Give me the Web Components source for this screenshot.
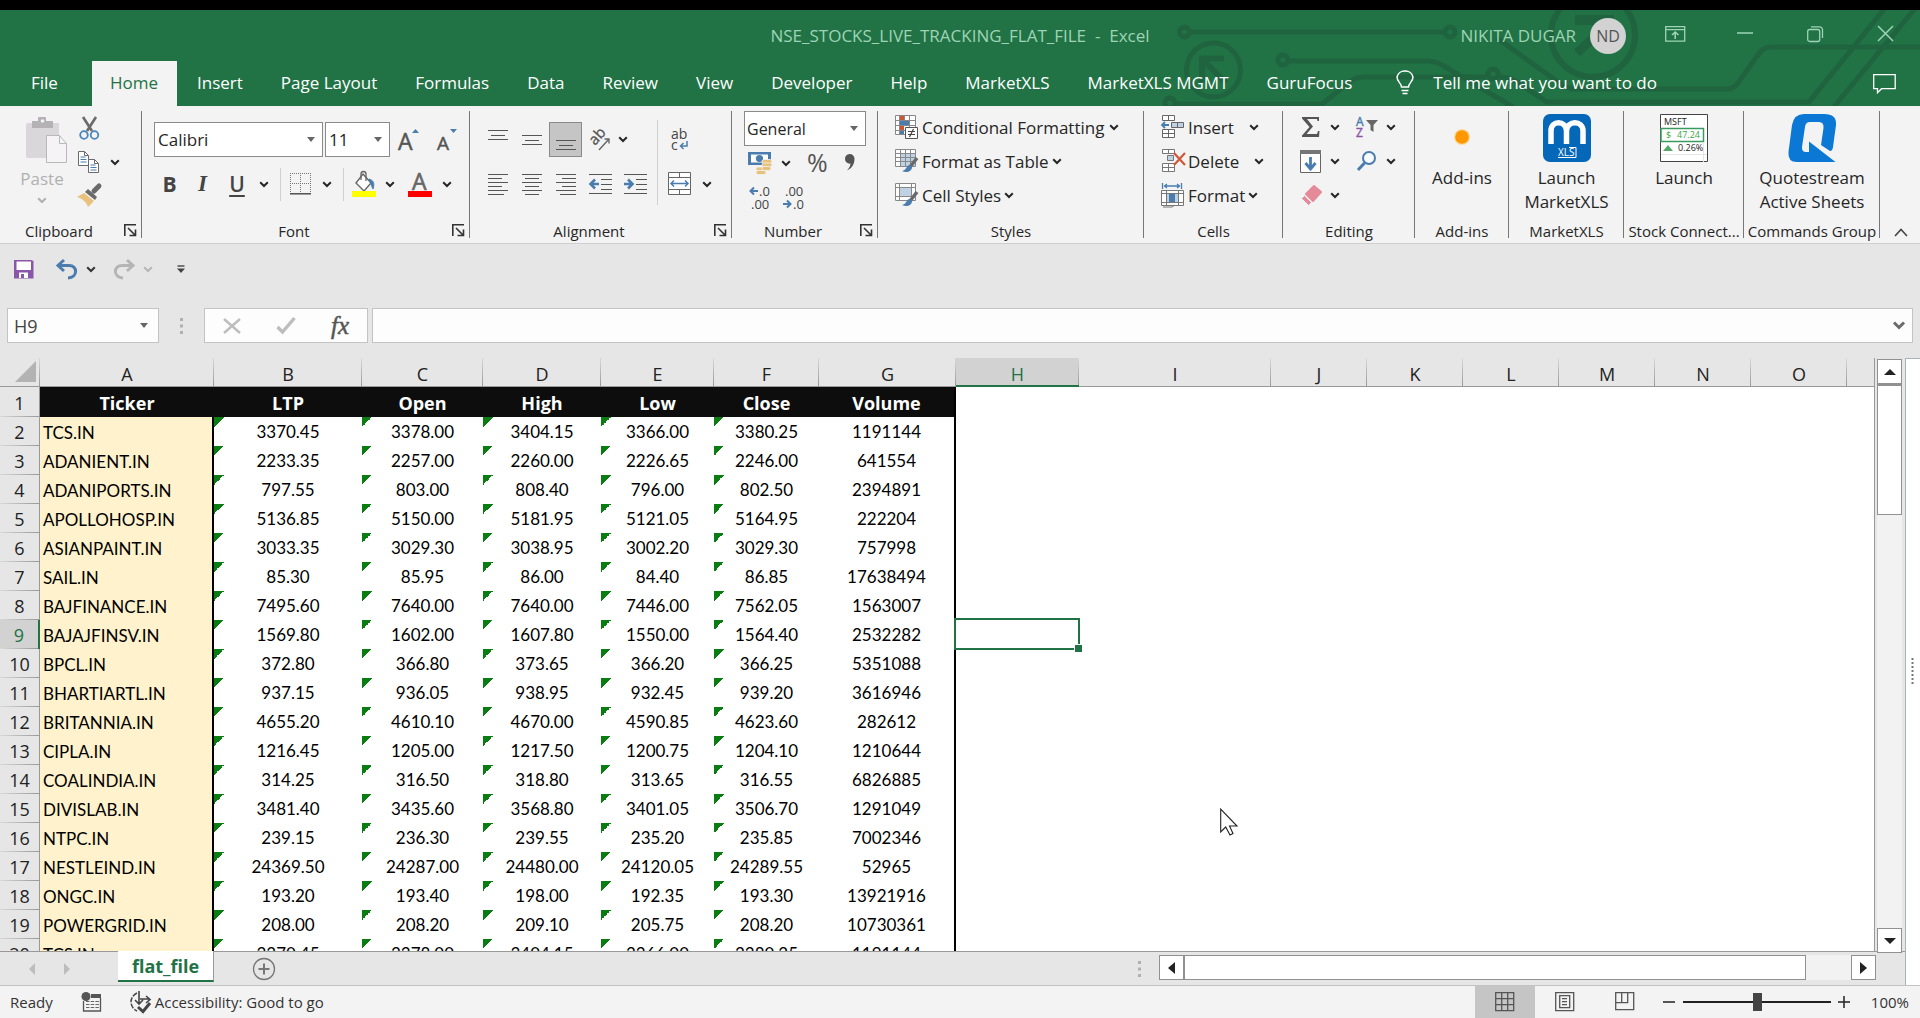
<!DOCTYPE html>
<html lang="en">
<head>
<meta charset="utf-8">
<title>NSE_STOCKS_LIVE_TRACKING_FLAT_FILE - Excel</title>
<style>
html,body{margin:0;height:100%}
body{font-family:"Open Sans","Noto Sans",sans-serif;font-size:17px;color:#262626;background:#e6e6e6;overflow:hidden}
</style>
</head>
<body>
<excel-window></excel-window>
<script>
const lines=(rows)=>rows.map(r=>`<path d="M${r[0]} ${r[2]}.5H${r[1]}" stroke="#555"/>`).join('');
const sheetBrush='<path d="M22 9l-7 9" stroke="#6a6a6a" stroke-width="3.5"/><path d="M15 16c-4 0-3 5-8 6 4 2 10 1 10-4z" fill="#4a7dae"/>';
const ICONS={
 chev:[10,7,'<path d="M1.2 1.2L5 5l3.800-3.800" fill="none" stroke="currentColor" stroke-width="2"/>'],
 caret:[8,5,'<path d="M0 0h8L4 5z" fill="#666"/>'],
 launch:[13,13,'<path d="M.8 12V.8H12M4 4l7 7M11.500 5.500v6h-6" fill="none" stroke="#333" stroke-width="1.600"/>'],
 paste:[42,46,'<path d="M2 6h31v12H22v23H2a2 2 0 0 1-2-2V8a2 2 0 0 1 2-2z" fill="#d9d7da"/><path d="M6 4h6V1a1 1 0 0 1 1-1h6a1 1 0 0 1 1 1v3h7v7H6z" fill="#b4b2b5"/><circle cx="16.500" cy="4" r="1.800" fill="#f3f3f3"/><path d="M20.500 18.500h13l7 8v19h-20z" fill="#f5f3f6" stroke="#b9b9b9"/><path d="M33.500 18.500v8h7" fill="none" stroke="#b9b9b9"/>'],
 cut:[21,23,'<path d="M4 0l9 14M17 0L8 14" stroke="#6a6a6a" stroke-width="2.600"/><g fill="none" stroke="#4a85bd" stroke-width="1.800"><circle cx="5" cy="18" r="3.800"/><circle cx="15.500" cy="18" r="3.800"/></g>'],
 copy:[22,23,'<g fill="#fff" stroke="#6a6a6a"><path d="M.5.5h6l4 4v10h-10z"/><path d="M10.500 8.500h6l4 4v9h-10z"/><path d="M6.500.5v4h4M16.500 8.500v4h4" fill="none"/></g><path d="M2.500 6h5M2.500 8.500h6M2.500 11h6M12.500 14h5M12.500 16.500h6M12.500 19h6" stroke="#4a7dae"/>'],
 brush:[24,22,'<path d="M17 6l5-5" stroke="#6a6a6a" stroke-width="5" stroke-linecap="round"/><path d="M11 4l9 8-2 3-10-8z" fill="#6a6a6a"/><path d="M7 8l10 8-6 6C9 16 4 13 0 12z" fill="#e8c17c"/>'],
 grow:[24,24,'<text x="1" y="22" font-size="23" fill="#555" stroke="#555" stroke-width=".5">A</text><path d="M15 5l3.500-4L22 5z" fill="#4a7dae"/>'],
 shrink:[24,24,'<text x="4" y="22" font-size="19" fill="#555" stroke="#555" stroke-width=".5">A</text><path d="M17 1h7l-3.500 4z" fill="#4a7dae"/>'],
 borders:[22,22,'<path d="M.5 0v21M0 .5h21M20.500 0v21M10.500 0v21M0 10.500h21" stroke="#777" stroke-dasharray="1 1"/><path d="M0 20.800h21" stroke="#444" stroke-width="1.400"/>'],
 fill:[24,26,'<path d="M11 3l8 9-7 8-8-8z" fill="#fff" stroke="#666" stroke-width="1.400"/><path d="M9 9V3a2.500 2.500 0 0 1 5 0v7" fill="none" stroke="#666" stroke-width="1.300"/><path d="M17 8c4 1 6 4 4 10-1-2-2-5-4-10z" fill="#4a7dae" stroke="#4a7dae"/><path d="M0 20h24v6H0z" fill="#ff0"/>'],
 fontcolor:[24,26,'<text x="4" y="19" font-size="23" fill="#666" stroke="#666" stroke-width=".6">A</text><path d="M0 20h24v6H0z" fill="#f00"/>'],
 top:[20,26,lines([[0,20,3],[3,17,8],[0,20,12]])],
 mid:[20,26,lines([[0,20,8],[3,17,13],[0,20,17]])],
 bot:[20,26,lines([[0,20,13],[3,17,18],[0,20,22]])],
 left:[20,22,lines([[0,20,1],[0,14,5],[0,20,9],[0,14,13],[0,20,17],[0,16,21]])],
 center:[20,22,lines([[0,20,1],[3,17,5],[0,20,9],[3,17,13],[0,20,17],[3,17,21]])],
 right:[20,22,lines([[0,20,1],[6,20,5],[0,20,9],[6,20,13],[0,20,17],[4,20,21]])],
 outdent:[24,22,lines([[0,23,1],[12,23,6],[12,23,11],[12,23,16],[0,23,20]])+'<path d="M10 11H2M6 6.500L1.500 11l4.500 4.500" stroke="#4a7dae" stroke-width="2.600" fill="none"/>'],
 indent:[24,22,lines([[0,23,1],[12,23,6],[12,23,11],[12,23,16],[0,23,20]])+'<path d="M0 11h8M4 6.500L8.500 11 4 15.500" stroke="#4a7dae" stroke-width="2.600" fill="none"/>'],
 orient:[22,22,'<text x="0" y="0" font-size="15" fill="#555" stroke="#555" stroke-width=".3" transform="translate(6 17) rotate(-48)">ab</text><path d="M10 21L20 10M15.500 10H20v4.500" fill="none" stroke="#666" stroke-width="1.400"/>'],
 wrap:[20,24,'<text x="1" y="11" font-size="14" fill="#444">ab</text><text x="1" y="22" font-size="14" fill="#444">c</text><path d="M17 13v5h-6M13.500 15l-3 3 3 3" fill="none" stroke="#4a7dae" stroke-width="1.500"/>'],
 merge:[24,24,'<path d="M.5.5h22v22H.5zM.5 5.500h22M.5 17.500h22M11.500.5v5M11.500 17.500v5" fill="#fff" stroke="#666"/><path d="M3 11.500h17M6 8.500l-3 3 3 3M17 8.500l3 3-3 3" fill="none" stroke="#4a7dae" stroke-width="1.500"/>'],
 money:[24,23,'<path d="M0 0h23v13H0z" fill="#4a7dae"/><path d="M3 2.500h17v8H3z" fill="#fff"/><circle cx="11.500" cy="6.500" r="3.600" fill="#4a7dae"/><g fill="#e8c17c" stroke="#f3f3f3" stroke-width=".8"><rect x="14" y="7.500" width="10" height="4" rx="2"/><rect x="14" y="11" width="10" height="4" rx="2"/><rect x="8" y="15" width="10" height="4" rx="2"/><rect x="8" y="18.500" width="10" height="4" rx="2"/><rect x="14" y="14.500" width="9" height="4" rx="2"/></g>'],
 pct:[22,24,'<text x="1" y="21" font-size="25" fill="#555">%</text>'],
 comma:[12,18,'<path d="M2 5a4.500 4.500 0 0 1 9.500-.5c0 6-2.500 9.500-7.500 12 2.500-3 3.500-5 3.500-7A4.500 4.500 0 0 1 2 5z" fill="#555"/>'],
 incdec:[24,25,'<path d="M9 6H2M5 2.500L1.500 6 5 9.500" stroke="#4a7dae" stroke-width="2" fill="none"/><text x="10" y="11" font-size="13" fill="#444">.0</text><text x="2" y="24" font-size="13" fill="#444">.00</text>'],
 decdec:[24,25,'<text x="2" y="11" font-size="13" fill="#444">.00</text><path d="M0 19h7M4 15.500L7.500 19 4 22.500" stroke="#4a7dae" stroke-width="2" fill="none"/><text x="10" y="24" font-size="13" fill="#444">.0</text>'],
 cond:[24,24,'<path d="M.5.5h20v19H.5z" fill="#fff"/><path d="M5 1h4v5H5zM5 11h4v4H5z" fill="#cf5532"/><path d="M5 6h9v4H5zM5 16h4v3H5z" fill="#4a7dae"/><path d="M.5.5h20v19H.5zM.5 5.500h20M.5 10.500h20M.5 15.500h20M4.500.5v19M9.500.5v5M14.500.5v19" fill="none" stroke="#888"/><path d="M10.500 12.500h12v11h-12z" fill="#fff" stroke="#555"/><path d="M13 16.500h7M13 19.500h7M18.500 14l-4 8" stroke="#444" stroke-width="1.200"/>'],
 table:[24,24,'<path d="M.5.5h20v17H.5z" fill="#fff"/><path d="M5 5h15v12H5z" fill="#bfd2e4"/><path d="M.5.500h20v17H.5zM.5 4.500h20M.5 8.500h20M.5 12.500h20M5.500.5v17M10.500.5v17M15.500.5v17" fill="none" stroke="#888"/>'+sheetBrush],
 cellst:[24,24,'<path d="M.5.5h20v17H.5z" fill="#fff"/><path d="M5 5h11v9H5z" fill="#bfd2e4"/><path d="M.5.5h20v17H.5zM.5 4.500h20M.5 13.500h20M4.500.5v17M16.500.5v17" fill="none" stroke="#888"/>'+sheetBrush],
 insert:[24,24,'<g fill="#fff" stroke="#666"><path d="M1.500.5h12v5h-12zM7.500.5v5M1.500 14.500h12v8h-12zM7.500 14.500v8M1.500 18.500h12"/><path d="M10.500 7.500h12v5h-12zM16.500 7.500v5" fill="#bfd2e4"/></g><path d="M8 10H1M4 7L1 10l3 3" fill="none" stroke="#4a7dae" stroke-width="1.800"/>'],
 del:[24,24,'<g fill="#fff" stroke="#777"><path d="M1.500.5h12v4h-12zM7.500.5v4M1.500 14.500h12v8h-12zM7.500 14.500v8M1.500 18.500h12"/><path d="M6.500 6.500h6v5h-6z" fill="#bfd2e4"/></g><path d="M13 4l11 12M24 4L13 16" stroke="#d0583a" stroke-width="2.200"/>'],
 format:[24,25,'<path d="M1.500 0v6M20.500 0v6M3 3h16M6 1L3.500 3 6 5M16 1l2.500 2L16 5" fill="none" stroke="#4a7dae" stroke-width="1.300"/><path d="M.5 7.500h22v15H.5z" fill="#fff"/><path d="M6 10h11v10H6z" fill="#bfd2e4"/><path d="M8 11h6v8H8z" fill="#4a7dae"/><path d="M.5 7.500h22v15H.5zM.5 10.500h22M.5 19.500h22M5.500 7.500v15M17.500 7.500v15" fill="none" stroke="#777"/><path d="M2 24h9l3-2" fill="none" stroke="#777"/>'],
 sum:[18,20,'<path d="M0 0h17v4h-1.500l-.5-2H5l6 7.500L4.500 17H15l1-3h1.500L17 20H0v-1.500L7.500 10 0 1.500z" fill="#555"/>'],
 sort:[22,20,'<text x="0" y="9" font-size="12" fill="#4a7dae" stroke="#4a7dae" stroke-width=".4">A</text><text x="0" y="20" font-size="12" fill="#8a56a8" stroke="#8a56a8" stroke-width=".4">Z</text><path d="M10 3h12l-4.500 5v7l-3-2V8z" fill="#666"/>'],
 filldown:[22,23,'<path d="M.5.5h20v22H.5z" fill="#fff" stroke="#666"/><path d="M0 0h21v4H0z" fill="#777"/><path d="M10.500 7v11M5.500 13l5 6 5-6" fill="none" stroke="#4a7dae" stroke-width="2.800"/>'],
 find:[20,20,'<circle cx="12" cy="7" r="6" fill="#f7fbff" stroke="#4a7dae" stroke-width="2"/><path d="M7.500 12L1 19" stroke="#4a7dae" stroke-width="3"/>'],
 eraser:[21,21,'<path d="M13 1l7 6-8 9-7-7z" fill="#e58a99" stroke="#e58a99" stroke-linejoin="round" stroke-width="2"/><path d="M3.500 10.500l7 7-3 3-7-7z" fill="#e58a99" stroke="#f3f3f3"/>'],
 dot:[18,18,'<circle cx="9" cy="9" r="8" fill="#fcd9a0"/><circle cx="9" cy="9" r="6.800" fill="#ff9800"/>'],
 mxls:[48,48,'<rect width="48" height="48" rx="7" fill="#0467b8"/><path d="M8 30V17c0-11 15-11 15.500 0v13V17C24 6 40 6 40 17v13" fill="none" stroke="#fff" stroke-width="5.500"/><text x="15" y="42" font-size="10" fill="#fff">XLS</text><path d="M15 43.500h18v-10h-7" fill="none" stroke="#fff"/>'],
 stock:[48,48,'<path d="M.5.5h47v47H.5z" fill="#fff" stroke="#444"/><text x="4" y="11" font-size="9" fill="#222">MSFT</text><path d="M1 14.500h42.500v13H1z" fill="#fff" stroke="#3a9a60" stroke-width="1.500"/><text x="6" y="24" font-size="9" fill="#3aa845">$</text><text x="17" y="24" font-size="9" fill="#3aa845">47.24</text><path d="M3 37l5-6 5 6z" fill="#55a868"/><text x="18" y="37" font-size="9" fill="#222">0.26%</text><path d="M1 40.500h46M43.500 28v20" stroke="#e6e6e6"/>'],
 quote:[48,48,'<path d="M16 0H36Q49 0 48 11L45 33Q44.500 37 42 37L33 31 35.500 14Q36 8 31 8H22Q17.500 8 17 13L14 33Q13.500 38 18 38H21V27.500L47.500 48H9Q-.5 48 .5 38L4 11Q6 0 16 0z" fill="#0a78d4"/>'],
 up:[14,9,'<path d="M1 8l6-6.500L13 8" fill="none" stroke="#444" stroke-width="1.600"/>'],
 save:[20,20,'<path d="M0 1h17l2.500 1v17.500H0z" fill="#8a56a8"/><path d="M2.500 2.500H17V11H2.500z" fill="#fff"/><path d="M5 13.500h9v5.500H5z" fill="#fff"/><path d="M7 15h3v4H7z" fill="#8a56a8"/>'],
 undo:[22,21,'<path d="M2 6.500h11c9 0 9 12-1 12.500M8 1L2 6.500 8 12" fill="none" stroke="#4a7dae" stroke-width="3"/>'],
 redo:[22,21,'<path d="M20 6.500H9c-9 0-9 12 1 12.500M14 1l6 5.500-6 5.500" fill="none" stroke="#b5b5b5" stroke-width="3"/>'],
 custom:[8,8,'<path d="M.5 1h7" stroke="#444" stroke-width="1.400"/><path d="M0 3.500h8L4 8z" fill="#444"/>'],
 cross:[18,16,'<path d="M1 1l16 14M17 1L1 15" stroke="#bdbdbd" stroke-width="2.400"/>'],
 check:[20,17,'<path d="M1.500 10l5 5L18.500 1" fill="none" stroke="#bdbdbd" stroke-width="3.400"/>'],
 boldchev:[12,9,'<path d="M1 1.500L6 6.500l5-5" fill="none" stroke="#6a6a6a" stroke-width="3"/>'],
 dots3:[3,16,'<path d="M0 0h3v3H0zM0 6.500h3v3H0zM0 13h3v3H0z" fill="#b0b0b0"/>'],
 dots7:[4,28,'<path d="M1.500 0v28" stroke="#777" stroke-width="2" stroke-dasharray="2 2"/>'],
 tu:[12,6,'<path d="M0 6h12L6 0z" fill="#222"/>'], td:[12,6,'<path d="M0 0h12L6 6z" fill="#222"/>'],
 tl:[7,12,'<path d="M7 0v12L0 6z" fill="#222"/>'], tr:[7,12,'<path d="M0 0v12l7-6z" fill="#222"/>'],
 navl:[6,12,'<path d="M6 0v12L0 6z" fill="#bdbdbd"/>'], navr:[6,12,'<path d="M0 0v12l6-6z" fill="#bdbdbd"/>'],
 add:[24,24,'<circle cx="12" cy="12" r="10.500" fill="none" stroke="#777" stroke-width="1.300"/><path d="M12 6.500v11M6.500 12h11" stroke="#777" stroke-width="2"/>'],
 macro:[22,20,'<circle cx="5" cy="4.500" r="4.500" fill="#555"/><path d="M10 2h10v4H10z" fill="#555"/><path d="M2.500 9v10h17V6" fill="none" stroke="#555" stroke-width="1.300"/><path d="M5 9.500h13M5 12.500h13M5 15.500h13" stroke="#666" stroke-dasharray="3.500 1.200"/>'],
 access:[22,22,'<path d="M7 2C-1 6-1 16 7 20" fill="none" stroke="#444" stroke-width="1.500" stroke-dasharray="5 1.500"/><path d="M9 0v13M5 9l4 4 4-4M10 8h9M16 5l4 3.500-4 3.500" fill="none" stroke="#444" stroke-width="1.600"/><path d="M8 16l5 4.500L20 12" fill="none" stroke="#444" stroke-width="3"/>'],
 normal:[20,20,'<path d="M.7.700h18v18H.7zM.7 6.700h18M.7 12.700h18M6.700.7v18M12.700.7v18" fill="none" stroke="#555" stroke-width="1.300"/>'],
 layout:[20,20,'<path d="M.7.700h18v18H.7zM4.700 3.700h10v12h-10zM7 6.700h5M7 9.700h5M7 12.700h5" fill="none" stroke="#555" stroke-width="1.300"/>'],
 breaks:[20,20,'<path d="M.7.700h18v17H.7zM.7 10.700h12v-10M6.700.7v10" fill="none" stroke="#555" stroke-width="1.300"/>'],
 ribbonopt:[21,16,'<path d="M.7.700h19v14.500H.7zM.7 3.700h19" fill="none" stroke="#9ed3b4" stroke-width="1.300"/><path d="M10.200 13V6.500M7 9l3.200-3L13.500 9" fill="none" stroke="#9ed3b4" stroke-width="1.600"/>'],
 min:[16,3,'<path d="M0 1h16" stroke="#9ed3b4" stroke-width="1.500"/>'],
 restore:[17,16,'<rect x=".7" y="3.500" width="12" height="12" rx="2" fill="none" stroke="#9ed3b4" stroke-width="1.300"/><path d="M4 .8h8.500a3 3 0 0 1 3 3V12" fill="none" stroke="#9ed3b4" stroke-width="1.300"/>'],
 close:[17,17,'<path d="M1 1l15 15M16 1L1 16" stroke="#9ed3b4" stroke-width="1.500"/>'],
 bulb:[18,25,'<path d="M5.500 17c0-4-4.500-5-4.500-10A7.800 7.800 0 0 1 9 1a7.800 7.800 0 0 1 8 6c0 5-4.500 6-4.500 10zM5.500 20.500h7M6.500 23.500h5" fill="none" stroke="#fff" stroke-width="1.500"/>'],
 comment:[23,20,'<path d="M.7.700h21.500v14H8.500l-4 4v-4H.7z" fill="none" stroke="#fff" stroke-width="1.300"/>'],
 pointer:[19,28,'<path d="M.7 1v23l5-5 4.300 8 3-1.500-3.500-7.500H17z" fill="#fff" stroke="#222" stroke-width="1.100"/>']
};
const icon=n=>`<x-icon name="${n}"></x-icon>`;
const btn=(n,l,c='')=>`<button class="${c}" aria-label="${l||n}">${icon(n)}</button>`;
const ch=(c='')=>btn('chev','More options','ch '+c);

const CSS=`*{box-sizing:border-box}
button{font:inherit;color:inherit;background:none;border:0;padding:0;margin:0;display:flex;align-items:center;justify-content:center;white-space:nowrap}
`;
function define(tag,css,html){
  customElements.define(tag,class extends HTMLElement{
    constructor(){super();this.attachShadow({mode:'open'});}
    connectedCallback(){this.shadowRoot.innerHTML=`<style>${CSS}${css}</style>`+(typeof html==='function'?html(this):html);}
  });
}
define('x-icon',`:host{display:block;flex:none}svg{display:block;font-family:"Open Sans",sans-serif;overflow:visible}`,
 el=>{const [w,h,p]=ICONS[el.getAttribute('name')];return `<svg width="${w}" height="${h}" viewBox="0 0 ${w} ${h}" aria-hidden="true">${p}</svg>`});

define('title-bar',`
:host{display:grid;grid-template-columns:1fr auto 1fr;align-items:center;height:51px;color:#9ed3b4;position:relative}
.title{white-space:pre}
.r{display:flex;justify-content:flex-end;align-items:center}
.av{width:36px;height:36px;border-radius:50%;background:#d2d2d2;color:#555;margin:0 14px;display:grid;place-items:center;font-size:16px}
.r button{width:70px;height:46px;padding-bottom:4px}`,
`<i></i><div class="title">NSE_STOCKS_LIVE_TRACKING_FLAT_FILE  -  Excel</div>
<div class="r"><span>NIKITA DUGAR</span><div class="av">ND</div>${btn('ribbonopt')}${btn('min')}${btn('restore')}${btn('close')}</div>`);

define('ribbon-tabs',`
:host{display:flex;height:45px;color:#fff;position:relative;align-items:stretch}
nav{display:flex;gap:3px}
nav a{color:inherit;text-decoration:none;padding:0 18px 2px 17px;display:flex;align-items:center;white-space:nowrap}
nav a:first-child{padding:0 31px 2px}
nav a.on{background:#f3f3f3;color:#217346;padding:0 19px 2px 18px}
nav{margin-right:26px}
.tell{gap:19px;padding-bottom:2px}
.cm{margin-left:auto;margin-right:24px}`,
`<nav>${['File','Home','Insert','Page Layout','Formulas','Data','Review','View','Developer','Help','MarketXLS','MarketXLS MGMT','GuruFocus'].map(t=>`<a href="#"${t==='Home'?' class="on"':''}>${t}</a>`).join('')}</nav>
<button class="tell">${icon('bulb')}<span>Tell me what you want to do</span></button>${btn('comment','Comments','cm')}`);

define('ribbon-group',`
:host{display:flex;flex-direction:column;height:137px;flex:none;position:relative;padding-bottom:6px;
 background:linear-gradient(#777,#777) right 5px/1px 127px no-repeat}
.body{flex:1;min-height:0}
footer{display:flex;height:13px;align-items:center;font-size:15px;white-space:nowrap}
footer span{flex:1;text-align:center}
footer button{width:24px}`,
el=>`<div class="body"><slot></slot></div><footer><span>${el.getAttribute('label')}</span>${el.hasAttribute('launcher')?btn('launch','More settings'):''}</footer>`);

define('combo-box',`
:host{display:grid;background:#fff;border:1px solid #8a8a8a;height:35px}
select{grid-area:1/1;font:inherit;font-size:17px;color:#262626;appearance:none;border:0;background:none;padding:0 0 0 3px;width:100%}
:host([label="Number format"]) select{font-size:16px;padding-left:2px}
x-icon{grid-area:1/1;justify-self:end;align-self:center;margin-right:7px;pointer-events:none}`,
el=>`<select aria-label="${el.getAttribute('label')}"><option>${el.getAttribute('value')}</option></select>${icon('caret')}`);

define('excel-ribbon',`
:host{display:flex;height:138px;background:#f3f3f3;border-bottom:1px solid #cfcfcf}
.row{display:grid;align-items:center;justify-items:center;justify-content:start}
.sep{width:1px;height:33px;background:#d0d0d0}
.b{font-weight:bold;font-size:21px;color:#444}.i{font:italic bold 23px "Liberation Serif",serif;color:#444}.u{font-size:21px;color:#444;text-decoration:underline;text-underline-offset:3px;font-weight:600}
.list{display:flex;flex-direction:column;padding:4px 0 0 17px}
.list button{height:34px;justify-content:flex-start;gap:3px}
.list .near{gap:3px}.list .near x-icon:last-child{margin-left:2px}
.list .far x-icon:last-child{margin-left:12px}
.clip{display:grid;grid-template-columns:72px 36px 16px;padding-top:5px}
.clip>div{display:grid;grid-template-rows:34px 34px 34px;place-items:center}
.clip>div button{padding-right:2px}
.paste{flex-direction:column;color:#b0b0b0;padding:6px 0 0 12px;justify-content:flex-start}
.paste x-icon:first-child{margin-left:9px}
.paste span{line-height:32px}.paste x-icon:last-child{margin-top:2px}
.font{padding:16px 0 0 12px;display:grid;gap:10px}
.font .r1{grid-template-columns:169px 65px 34px 34px;gap:2px;height:35px}
.font .r1 combo-box{justify-self:stretch}
.font .r2{grid-template-columns:31px 35px 34px 20px 12px 30px 22px 10px 32px 20px 40px 14px;height:34px}
.al{display:flex;padding:14px 0 0 11px}
.al .r1{grid-template-columns:34px 34px 33px 36px 10px;height:39px}
.al .r2{grid-template-columns:34px 34px 34px 36px 34px;height:50px}
.al .r3{grid-template-columns:40px 14px;height:39px}.al .r4{grid-template-columns:40px 14px;height:50px}
.al .sep{height:85px;margin:0 2px 0 4px}
.sel{width:33px;height:35px;background:#c5c5c5;border:1px solid #8a8a8a}
.num{padding:5px 0 0 12px}
.num combo-box{width:122px}
.num .r1{grid-template-columns:32px 20px 42px 22px;height:34px}
.num .r2{grid-template-columns:34px 34px;height:34px;}
.ed{display:grid;grid-template-columns:36px 12px 43px 14px;grid-template-rows:34px 34px 34px;padding:4px 0 0 10px;place-items:center}
.ed .in{padding-left:9px}
.big{flex-direction:column;width:100%;padding-top:8px;line-height:24px}
.big x-icon{height:48px;margin-bottom:4px}
.big .sm{padding:14px 0}
.end button{margin:122px 0 0 14px}`,
`<ribbon-group label="Clipboard" launcher style="width:142px"><div class="clip"><button class="paste">${icon('paste')}<span>Paste</span>${icon('chev')}</button><div>${btn('cut')}${btn('copy')}${btn('brush')}</div><div><i></i>${ch()}</div></div></ribbon-group>
<ribbon-group label="Font" launcher style="width:328px"><div class="font"><div class="row r1"><combo-box label="Font" value="Calibri"></combo-box><combo-box label="Font size" value="11"></combo-box>${btn('grow')}${btn('shrink')}</div>
<div class="row r2"><button class="b">B</button><button class="i">I</button><button class="u">U</button>${ch()}<i class="sep"></i>${btn('borders')}${ch()}<i class="sep"></i>${btn('fill')}${ch()}${btn('fontcolor')}${ch()}</div></div></ribbon-group>
<ribbon-group label="Alignment" launcher style="width:262px"><div class="al"><div><div class="row r1">${btn('top')}${btn('mid')}${btn('bot','Bottom align','sel')}${btn('orient')}${ch()}</div><div class="row r2">${btn('left')}${btn('center')}${btn('right')}${btn('outdent')}${btn('indent')}</div></div><i class="sep"></i><div><div class="row r3">${btn('wrap')}</div><div class="row r4">${btn('merge')}${ch()}</div></div></div></ribbon-group>
<ribbon-group label="Number" launcher style="width:146px"><div class="num"><combo-box label="Number format" value="General"></combo-box><div class="row r1">${btn('money')}${ch()}${btn('pct')}${btn('comma')}</div><div class="row r2">${btn('incdec')}${btn('decdec')}</div></div></ribbon-group>
<ribbon-group label="Styles" style="width:266px"><div class="list"><button class="near">${icon('cond')}<span>Conditional Formatting</span>${icon('chev')}</button><button>${icon('table')}<span>Format as Table</span>${icon('chev')}</button><button>${icon('cellst')}<span>Cell Styles</span>${icon('chev')}</button></div></ribbon-group>
<ribbon-group label="Cells" style="width:139px"><div class="list"><button class="far">${icon('insert')}<span>Insert</span>${icon('chev')}</button><button class="far">${icon('del')}<span>Delete</span>${icon('chev')}</button><button>${icon('format')}<span>Format</span>${icon('chev')}</button></div></ribbon-group>
<ribbon-group label="Editing" style="width:132px"><div class="ed">${btn('sum')}${ch()}${btn('sort','Sort and filter','in')}${ch()}${btn('filldown')}${ch()}${btn('find','Find','in')}${ch()}${btn('eraser')}${ch()}</div></ribbon-group>
<ribbon-group label="Add-ins" style="width:94px"><button class="big"><x-icon name="dot" class="sm"></x-icon>Add-ins</button></ribbon-group>
<ribbon-group label="MarketXLS" style="width:115px"><button class="big">${icon('mxls')}<span>Launch<br>MarketXLS</span></button></ribbon-group>
<ribbon-group label="Stock Connect..." style="width:120px"><button class="big">${icon('stock')}Launch</button></ribbon-group>
<ribbon-group label="Commands Group" style="width:136px"><button class="big">${icon('quote')}<span>Quotestream<br>Active Sheets</span></button></ribbon-group>
<div class="end">${btn('up','Collapse the ribbon')}</div>`);

define('quick-access',`
:host{display:grid;grid-template-columns:47px 39px 10px 47px 10px 56px;height:50px;align-items:center;justify-items:center;color:#333}
.d{color:#b5b5b5}.re{padding-left:9px}`,
`${btn('save')}${btn('undo')}${ch()}${btn('redo','Redo','re')}${ch('d')}${btn('custom')}`);

define('formula-bar',`
:host{display:flex;padding:14px 7px 15px 7px;height:64px}
.name,.fx,.in{background:#fdfdfd;border:1px solid #c3c3c3;display:flex;align-items:center}
.name{width:152px}.name button{width:28px}
input{flex:1;min-width:0;border:0;background:none;font:inherit;font-size:18px;color:#444;padding:0 0 0 6px;outline:0}
.g{width:45px;display:grid;place-items:center}
.fx{width:164px;margin-right:4px}.fx button{flex:1}
.fx .f{font:italic 25px "Liberation Serif",serif;color:#555;-webkit-text-stroke:.5px #555}
.in{flex:1}.in button{width:26px}`,
`<div class="name"><input aria-label="Name box" value="H9">${btn('caret','Names')}</div><div class="g">${icon('dots3')}</div>
<div class="fx">${btn('cross','Cancel')}${btn('check','Enter')}<button class="f">fx</button></div>
<div class="in"><input aria-label="Formula" value="">${btn('boldchev','Expand')}</div>`);

const DATA=`TCS.IN 3370.45 3378.00 3404.15 3366.00 3380.25 1191144
ADANIENT.IN 2233.35 2257.00 2260.00 2226.65 2246.00 641554
ADANIPORTS.IN 797.55 803.00 808.40 796.00 802.50 2394891
APOLLOHOSP.IN 5136.85 5150.00 5181.95 5121.05 5164.95 222204
ASIANPAINT.IN 3033.35 3029.30 3038.95 3002.20 3029.30 757998
SAIL.IN 85.30 85.95 86.00 84.40 86.85 17638494
BAJFINANCE.IN 7495.60 7640.00 7640.00 7446.00 7562.05 1563007
BAJAJFINSV.IN 1569.80 1602.00 1607.80 1550.00 1564.40 2532282
BPCL.IN 372.80 366.80 373.65 366.20 366.25 5351088
BHARTIARTL.IN 937.15 936.05 938.95 932.45 939.20 3616946
BRITANNIA.IN 4655.20 4610.10 4670.00 4590.85 4623.60 282612
CIPLA.IN 1216.45 1205.00 1217.50 1200.75 1204.10 1210644
COALINDIA.IN 314.25 316.50 318.80 313.65 316.55 6826885
DIVISLAB.IN 3481.40 3435.60 3568.80 3401.05 3506.70 1291049
NTPC.IN 239.15 236.30 239.55 235.20 235.85 7002346
NESTLEIND.IN 24369.50 24287.00 24480.00 24120.05 24289.55 52965
ONGC.IN 193.20 193.40 198.00 192.35 193.30 13921916
POWERGRID.IN 208.00 208.20 209.10 205.75 208.20 10730361
TCS.IN 3370.45 3378.00 3404.15 3366.00 3380.25 1191144`.split('\n').map(r=>r.split(' '));
const COLS=[40,174,148,121,118,113,105,137,123,192,96,96,96,96,96,96,0];
const LET='ABCDEFGHIJKLMNO';
define('sheet-grid',`
:host{display:block;flex:1;min-width:0;overflow:hidden;background:#fff;border-right:1px solid #999;position:relative}
table{border-collapse:separate;border-spacing:0;table-layout:fixed;width:100%}
td,th{padding:0;text-align:center;overflow:hidden;white-space:nowrap;font-weight:normal;height:29px;line-height:28px}
thead th{background:linear-gradient(#d8d8d8,#999) right/1px 100% no-repeat #e6e6e6;border-bottom:1px solid #999;font-size:18px;color:#222;height:29px;padding:0}
thead th div{height:28px;line-height:32px}
thead th.s{background-color:#d2d2d2;color:#217346;border-bottom:2px solid #217346}
thead th.s div{height:27px}
thead th:last-child{background:#e6e6e6}
.corner svg{display:block;margin-left:15px}
tbody th{background:linear-gradient(90deg,#d8d8d8,#999) bottom/100% 1px no-repeat #e6e6e6;border-right:1px solid #999;font-size:18px;color:#222;line-height:28px;padding-top:1px}
tbody th.s{background-color:#d2d2d2;color:#217346;border-right:2px solid #217346}
td{font-family:Lato,"Open Sans",sans-serif;font-size:17px;color:#000;line-height:29px}
tr.h td,tr.h th{height:30px;line-height:28px;padding-top:2px}
tr.h td.k{background:#0d0d0d;color:#fff;font:bold 18px/28px "Open Sans",sans-serif}
td.t{background:#fff2cc;text-align:left;padding:2px 0 0 3px;line-height:27px}
td.t,td.e{border-right:2px solid #000}
td.w{background:linear-gradient(135deg,#0a7d12 0 50%,transparent 50%) 0 0/10px 10px no-repeat}
td.a{position:relative;overflow:visible}
td.a i{position:absolute;inset:-2px -1px -1px -2px;border:2px solid #217346}
td.a b{position:absolute;right:-3px;bottom:-3px;width:8px;height:8px;background:#217346;border:solid #fff;border-width:1px 0 0 1px}`,
()=>`<table><colgroup>${COLS.map(w=>w?`<col style="width:${w}px">`:'<col>').join('')}</colgroup>
<thead><tr><th class="corner"><svg width="22" height="22" aria-hidden="true"><path d="M21 0v21H0z" fill="#b3b3b3"/></svg></th>${[...LET].map(l=>`<th${l==='H'?' class="s"':''}><div>${l}</div></th>`).join('')}<th></th></tr></thead>
<tbody><tr class="h"><th>1</th>${['Ticker','LTP','Open','High','Low','Close','Volume'].map((t,i)=>`<td class="k${i===6?' e':''}">${t}</td>`).join('')}${'<td></td>'.repeat(9)}</tr>
${DATA.map((r,i)=>`<tr><th${i===7?' class="s"':''}>${i+2}</th>${r.map((c,j)=>`<td class="${j===0?'t':j===6?'e':'w'}">${c}</td>`).join('')}${i===7?'<td class="a"><i></i><b></b></td>':'<td></td>'}${'<td></td>'.repeat(8)}</tr>`).join('')}</tbody></table>`);

define('scroll-bar',`
:host{display:flex;background:#f2f2f2}
:host([dir=v]){flex-direction:column;width:25px}
:host([dir=h]){height:25px}
button{width:25px;height:25px;background:#fff;border:1px solid #919191;flex:none}
.thumb{background:#fff;border:1px solid #919191}
.sp{flex:1}
:host([dir=v]) .thumb{flex:0 0 22%;border-top-width:2px}
:host([dir=h]) .thumb{flex:0 0 622px}`,
el=>{const v=el.getAttribute('dir')==='v';return `${btn(v?'tu':'tl','Back')}<div class="thumb"></div><div class="sp"></div>${btn(v?'td':'tr','Forward')}`});

define('sheet-tabs',`
:host{display:flex;height:34px;border-top:1px solid #999;background:#e6e6e6}
.nav{display:flex;width:118px;padding-left:19px;align-items:center}
.nav button{width:26px;margin-right:9px}
.tab{width:96px;background:#fff;color:#217346;font-weight:bold;font-size:18px;border-bottom:2px solid #217346;border-right:1px solid #999;margin-top:-1px;height:31px}
.add{margin-left:38px}
.g{margin-left:auto;margin-right:18px;align-self:center}
scroll-bar{width:717px;margin:3px 29px 0 0}`,
`<div class="nav">${btn('navl','Previous sheet')}${btn('navr','Next sheet')}</div><button class="tab">flat_file</button>${btn('add','New sheet','add')}<div class="g">${icon('dots3')}</div><scroll-bar dir="h"></scroll-bar>`);

define('status-bar',`
:host{display:flex;height:33px;background:#f3f3f3;border-top:1px solid #c3c3c3;font-size:15px;align-items:center;padding-left:10px;color:#333}
.m{margin:0 27px 0 28px}.acc{gap:3px}
.views{margin-left:auto;display:flex;align-self:stretch}
.views button{width:60px}.views .on{background:#c5c5c5}
.pm{width:28px;height:24px}
.pm+.z,input+.pm{width:26px}
input{appearance:none;width:148px;height:18px;margin:0;background:linear-gradient(#222,#222) center/100% 2px no-repeat}
input::-webkit-slider-thumb{appearance:none;width:9px;height:18px;background:#444}
.pm+span.z{width:63px;text-align:right;padding-right:11px}
.pm svg{display:block}`,
`<span>Ready</span>${btn('macro','Record macro','m')}<button class="acc">${icon('access')}<span>Accessibility: Good to go</span></button>
<div class="views">${btn('normal','Normal','on')}${btn('layout','Page layout')}${btn('breaks','Page break preview')}</div>
<button class="pm" aria-label="Zoom out"><svg width="12" height="12"><path d="M0 6h12" stroke="#222" stroke-width="1.500"/></svg></button><input type="range" aria-label="Zoom" value="50"><button class="pm" aria-label="Zoom in"><svg width="12" height="12"><path d="M0 6h12M6 0v12" stroke="#222" stroke-width="1.500"/></svg></button><span class="z">100%</span>`);

define('excel-window',`
:host{display:flex;flex-direction:column;height:100vh;background:#e6e6e6;overflow:hidden;position:relative}
.bar{height:10px;background:#000;flex:none}
header{position:relative;background:#217346;flex:none}
.art{position:absolute;right:0;top:0}
excel-ribbon,quick-access,formula-bar,status-bar,sheet-tabs{flex:none}
main{flex:1;display:flex;min-height:0}
.left{flex:1;min-width:0;display:flex;flex-direction:column}
.top{flex:1;display:flex;min-height:0;gap:2px;padding-right:3px}
.top scroll-bar{margin:1px 0 -2px;position:relative}
aside{width:15px;background:#fff;border:solid #a9b3b8;border-width:1px 0 0 1px;display:grid;place-items:center}
.ptr{position:absolute;left:1220px;top:808px}`,
`<div class="bar"></div>
<header><svg class="art" width="760" height="96" viewBox="1160 10 760 96" fill="none" stroke="#1f643f" stroke-width="5" aria-hidden="true">
<circle cx="1184.500" cy="32" r="5"/><path d="M1190 32h254"/><circle cx="1450" cy="32" r="5"/>
<circle cx="1213.500" cy="70" r="27"/><path d="M1199 58.500h25M1202 58v24M1202 59l24 24" stroke-width="6"/>
<circle cx="1283" cy="60" r="5"/><path d="M1289 61h138q8 0 15 4l71 42"/>
<circle cx="1170" cy="103" r="5"/><path d="M1176 104h146l26-21q7-6 15-6h123"/><circle cx="1493" cy="74" r="5"/><path d="M1499 77q12 0 20 6l28 19h262l76-94"/>
<path d="M1497 38l65 47q6 4 14 4h150q8 0 12-6l22-31q4-5 12-5h150"/><path d="M1833 108l84-102"/>
<circle cx="1593" cy="35" r="42" stroke-width="6"/><path d="M1575 20h39" stroke-width="10"/><path d="M1577 53l30-28" stroke-width="9"/>
</svg><title-bar></title-bar><ribbon-tabs></ribbon-tabs></header>
<excel-ribbon></excel-ribbon><quick-access></quick-access><formula-bar></formula-bar>
<main><div class="left"><div class="top"><sheet-grid></sheet-grid><scroll-bar dir="v"></scroll-bar></div><sheet-tabs></sheet-tabs></div><aside>${icon('dots7')}</aside></main>
<status-bar></status-bar><x-icon class="ptr" name="pointer"></x-icon>`);
</script>
</body>
</html>
